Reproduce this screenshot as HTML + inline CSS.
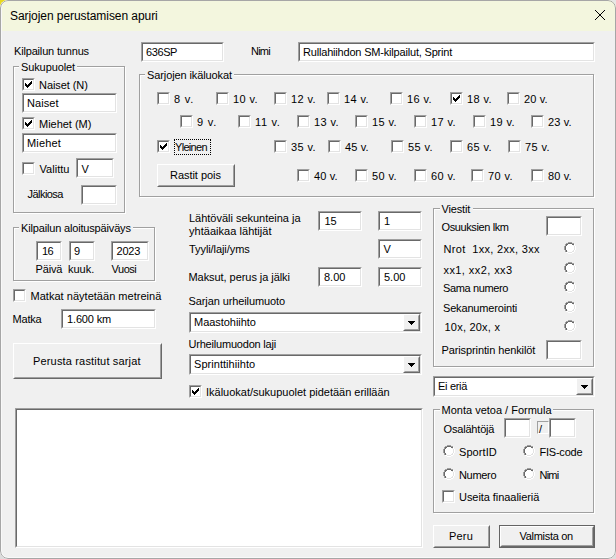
<!DOCTYPE html>
<html><head><meta charset="utf-8"><style>
html,body{margin:0;padding:0;width:616px;height:559px;overflow:hidden;background:#dcdcdc;}
.win{position:absolute;left:0;top:0;width:616px;height:559px;background:#f0f0f0;border-radius:8px;overflow:hidden;}
.frame{position:absolute;left:0;top:0;width:616px;height:559px;border-radius:8px;box-sizing:border-box;border:1px solid #a6a6a6;}
.hl{position:absolute;left:1px;top:1px;width:614px;height:557px;border-radius:7px;box-sizing:border-box;border-left:1px solid #f8f8f8;border-bottom:1px solid #f8f8f8;}
.title{position:absolute;left:0;top:0;width:616px;height:31px;background:#f3f6de;}
.ab{position:absolute;}
.t{position:absolute;white-space:pre;font-family:"Liberation Sans", sans-serif;}
.sk{position:absolute;border-style:solid;border-width:1px;border-color:#a0a0a0 #fff #fff #a0a0a0;}
.sk2{border-style:solid;border-width:1px;border-color:#696969 #e3e3e3 #e3e3e3 #696969;}
.rs{position:absolute;border-style:solid;border-width:1px;border-color:#fff #696969 #696969 #fff;background:#f0f0f0;}
.rs2{border-style:solid;border-width:1px;border-color:#f0f0f0 #a0a0a0 #a0a0a0 #f0f0f0;}
.cb{position:absolute;width:11px;height:11px;border-style:solid;border-width:1px;border-color:#a0a0a0 #fff #fff #a0a0a0;}
.gp{position:absolute;border-style:solid;border-width:1px;border-color:#a0a0a0 #fff #fff #a0a0a0;box-shadow:1px 1px 0 0 #fff inset, 1px 1px 0 0 #a0a0a0;}
</style></head><body>
<div class="ab" style="left:0;top:0;width:10px;height:10px;background:#e8d820"></div><div class="ab" style="left:606px;top:0;width:10px;height:10px;background:#e6e6e6"></div>
<div class="win">
<div class="title"></div>
<div class="t" style="left:10px;top:10px;font-size:12px;line-height:12px;color:#000;letter-spacing:-0.065px;">Sarjojen perustamisen apuri</div>
<svg class="ab" style="left:594px;top:9px" width="12" height="12"><path d="M1 1 L11 11 M11 1 L1 11" stroke="#000" stroke-width="1"/></svg>
<div class="t" style="left:14px;top:46px;font-size:11px;line-height:11px;color:#000;letter-spacing:-0.173px;">Kilpailun tunnus</div>
<div class="sk" style="left:141px;top:42px;width:81px;height:18px;"><div class="sk2" style="width:79px;height:16px;background:#fff"></div></div>
<div class="t" style="left:146px;top:47px;font-size:11px;line-height:11px;color:#000;letter-spacing:-0.4px;">636SP</div>
<div class="t" style="left:251px;top:46px;font-size:11px;line-height:11px;color:#000;letter-spacing:-0.8px;">Nimi</div>
<div class="sk" style="left:298px;top:42px;width:295px;height:18px;"><div class="sk2" style="width:293px;height:16px;background:#fff"></div></div>
<div class="t" style="left:303px;top:47px;font-size:11px;line-height:11px;color:#000;letter-spacing:-0.188px;">Rullahiihdon SM-kilpailut, Sprint</div>
<div class="ab" style="left:14px;top:67px;width:112px;height:147px;border:1px solid #fff;box-sizing:border-box"></div>
<div class="ab" style="left:13px;top:66px;width:112px;height:147px;border:1px solid #a0a0a0;box-sizing:border-box"></div>
<div class="ab" style="left:19px;top:62px;width:57.5px;height:8px;background:#f0f0f0"></div>
<div class="t" style="left:21px;top:62px;font-size:11px;line-height:11px;color:#000;letter-spacing:-0.111px;">Sukupuolet</div>
<div class="cb" style="left:22px;top:78px;"><div class="sk2" style="width:9px;height:9px;background:#fff"></div><svg width="7" height="7" style="position:absolute;left:2px;top:2px" shape-rendering="crispEdges"><path d="M6 0h1v1h-1zM5 1h1v1h-1zM6 1h1v1h-1zM0 2h1v1h-1zM4 2h1v1h-1zM5 2h1v1h-1zM6 2h1v1h-1zM0 3h1v1h-1zM1 3h1v1h-1zM3 3h1v1h-1zM4 3h1v1h-1zM5 3h1v1h-1zM0 4h1v1h-1zM1 4h1v1h-1zM2 4h1v1h-1zM3 4h1v1h-1zM4 4h1v1h-1zM1 5h1v1h-1zM2 5h1v1h-1zM3 5h1v1h-1zM2 6h1v1h-1z" fill="#000"/></svg></div>
<div class="t" style="left:39px;top:80px;font-size:11px;line-height:11px;color:#000;letter-spacing:-0.066px;">Naiset (N)</div>
<div class="sk" style="left:22px;top:93px;width:93px;height:18px;"><div class="sk2" style="width:91px;height:16px;background:#fff"></div></div>
<div class="t" style="left:27px;top:98px;font-size:11px;line-height:11px;color:#000;letter-spacing:0.08px;">Naiset</div>
<div class="cb" style="left:22px;top:117px;"><div class="sk2" style="width:9px;height:9px;background:#fff"></div><svg width="7" height="7" style="position:absolute;left:2px;top:2px" shape-rendering="crispEdges"><path d="M6 0h1v1h-1zM5 1h1v1h-1zM6 1h1v1h-1zM0 2h1v1h-1zM4 2h1v1h-1zM5 2h1v1h-1zM6 2h1v1h-1zM0 3h1v1h-1zM1 3h1v1h-1zM3 3h1v1h-1zM4 3h1v1h-1zM5 3h1v1h-1zM0 4h1v1h-1zM1 4h1v1h-1zM2 4h1v1h-1zM3 4h1v1h-1zM4 4h1v1h-1zM1 5h1v1h-1zM2 5h1v1h-1zM3 5h1v1h-1zM2 6h1v1h-1z" fill="#000"/></svg></div>
<div class="t" style="left:39px;top:119px;font-size:11px;line-height:11px;color:#000;letter-spacing:-0.022px;">Miehet (M)</div>
<div class="sk" style="left:22px;top:133px;width:93px;height:18px;"><div class="sk2" style="width:91px;height:16px;background:#fff"></div></div>
<div class="t" style="left:27px;top:138px;font-size:11px;line-height:11px;color:#000;letter-spacing:0.16px;">Miehet</div>
<div class="cb" style="left:22px;top:162px;"><div class="sk2" style="width:9px;height:9px;background:#fff"></div></div>
<div class="t" style="left:39.5px;top:164px;font-size:11px;line-height:11px;color:#000;letter-spacing:0.033px;">Valittu</div>
<div class="sk" style="left:76px;top:158px;width:36px;height:18px;"><div class="sk2" style="width:34px;height:16px;background:#fff"></div></div>
<div class="t" style="left:81.5px;top:164px;font-size:11px;line-height:11px;color:#000;">V</div>
<div class="t" style="left:27.5px;top:189px;font-size:11px;line-height:11px;color:#000;letter-spacing:-0.543px;">Jälkiosa</div>
<div class="sk" style="left:81px;top:185px;width:34px;height:18px;"><div class="sk2" style="width:32px;height:16px;background:#fff"></div></div>
<div class="ab" style="left:14px;top:228px;width:142px;height:54px;border:1px solid #fff;box-sizing:border-box"></div>
<div class="ab" style="left:13px;top:227px;width:142px;height:54px;border:1px solid #a0a0a0;box-sizing:border-box"></div>
<div class="ab" style="left:19px;top:223px;width:113.6px;height:8px;background:#f0f0f0"></div>
<div class="t" style="left:21px;top:223px;font-size:11px;line-height:11px;color:#000;letter-spacing:-0.166px;">Kilpailun aloituspäiväys</div>
<div class="sk" style="left:36px;top:241px;width:24px;height:18px;"><div class="sk2" style="width:22px;height:16px;background:#fff"></div></div>
<div class="t" style="left:42px;top:246px;font-size:11px;line-height:11px;color:#000;letter-spacing:-0.6px;">16</div>
<div class="sk" style="left:69px;top:241px;width:24px;height:18px;"><div class="sk2" style="width:22px;height:16px;background:#fff"></div></div>
<div class="t" style="left:74px;top:246px;font-size:11px;line-height:11px;color:#000;">9</div>
<div class="sk" style="left:111px;top:241px;width:36px;height:18px;"><div class="sk2" style="width:34px;height:16px;background:#fff"></div></div>
<div class="t" style="left:116.5px;top:246px;font-size:11px;line-height:11px;color:#000;letter-spacing:-0.2px;">2023</div>
<div class="t" style="left:35.5px;top:264px;font-size:11px;line-height:11px;color:#000;letter-spacing:-0.15px;">Päivä</div>
<div class="t" style="left:68px;top:264px;font-size:11px;line-height:11px;color:#000;letter-spacing:0.0px;">kuuk.</div>
<div class="t" style="left:111.5px;top:264px;font-size:11px;line-height:11px;color:#000;letter-spacing:-0.45px;">Vuosi</div>
<div class="cb" style="left:13px;top:289px;"><div class="sk2" style="width:9px;height:9px;background:#fff"></div></div>
<div class="t" style="left:30.5px;top:291px;font-size:11px;line-height:11px;color:#000;letter-spacing:0.025px;">Matkat näytetään metreinä</div>
<div class="t" style="left:12.5px;top:314px;font-size:11px;line-height:11px;color:#000;letter-spacing:-0.2px;">Matka</div>
<div class="sk" style="left:61px;top:309px;width:93px;height:18px;"><div class="sk2" style="width:91px;height:16px;background:#fff"></div></div>
<div class="t" style="left:67px;top:314px;font-size:11px;line-height:11px;color:#000;letter-spacing:-0.143px;">1.600 km</div>
<div class="rs" style="left:13px;top:343px;width:147px;height:34px;"><div class="rs2" style="width:145px;height:32px;"></div></div>
<div class="t" style="left:33px;top:356px;font-size:11px;line-height:11px;color:#000;letter-spacing:0.164px;">Perusta rastitut sarjat</div>
<div class="sk" style="left:15px;top:408px;width:406px;height:138px;"><div class="sk2" style="width:404px;height:136px;background:#fff"></div></div>
<div class="ab" style="left:140px;top:75px;width:455px;height:123px;border:1px solid #fff;box-sizing:border-box"></div>
<div class="ab" style="left:139px;top:74px;width:455px;height:123px;border:1px solid #a0a0a0;box-sizing:border-box"></div>
<div class="ab" style="left:145px;top:70px;width:89.1px;height:8px;background:#f0f0f0"></div>
<div class="t" style="left:147px;top:70px;font-size:11px;line-height:11px;color:#000;letter-spacing:-0.106px;">Sarjojen ikäluokat</div>
<div class="cb" style="left:157px;top:92px;"><div class="sk2" style="width:9px;height:9px;background:#fff"></div></div>
<div class="t" style="left:174px;top:94px;font-size:11px;line-height:11px;color:#000;letter-spacing:0.8px;">8 v.</div>
<div class="cb" style="left:216px;top:92px;"><div class="sk2" style="width:9px;height:9px;background:#fff"></div></div>
<div class="t" style="left:233px;top:94px;font-size:11px;line-height:11px;color:#000;letter-spacing:0.4px;">10 v.</div>
<div class="cb" style="left:274px;top:92px;"><div class="sk2" style="width:9px;height:9px;background:#fff"></div></div>
<div class="t" style="left:291px;top:94px;font-size:11px;line-height:11px;color:#000;letter-spacing:0.4px;">12 v.</div>
<div class="cb" style="left:327px;top:92px;"><div class="sk2" style="width:9px;height:9px;background:#fff"></div></div>
<div class="t" style="left:344px;top:94px;font-size:11px;line-height:11px;color:#000;letter-spacing:0.4px;">14 v.</div>
<div class="cb" style="left:390px;top:92px;"><div class="sk2" style="width:9px;height:9px;background:#fff"></div></div>
<div class="t" style="left:407px;top:94px;font-size:11px;line-height:11px;color:#000;letter-spacing:0.4px;">16 v.</div>
<div class="cb" style="left:450px;top:92px;"><div class="sk2" style="width:9px;height:9px;background:#fff"></div><svg width="7" height="7" style="position:absolute;left:2px;top:2px" shape-rendering="crispEdges"><path d="M6 0h1v1h-1zM5 1h1v1h-1zM6 1h1v1h-1zM0 2h1v1h-1zM4 2h1v1h-1zM5 2h1v1h-1zM6 2h1v1h-1zM0 3h1v1h-1zM1 3h1v1h-1zM3 3h1v1h-1zM4 3h1v1h-1zM5 3h1v1h-1zM0 4h1v1h-1zM1 4h1v1h-1zM2 4h1v1h-1zM3 4h1v1h-1zM4 4h1v1h-1zM1 5h1v1h-1zM2 5h1v1h-1zM3 5h1v1h-1zM2 6h1v1h-1z" fill="#000"/></svg></div>
<div class="t" style="left:467px;top:94px;font-size:11px;line-height:11px;color:#000;letter-spacing:0.4px;">18 v.</div>
<div class="cb" style="left:507px;top:92px;"><div class="sk2" style="width:9px;height:9px;background:#fff"></div></div>
<div class="t" style="left:524px;top:94px;font-size:11px;line-height:11px;color:#000;letter-spacing:0.15px;">20 v.</div>
<div class="cb" style="left:180px;top:115px;"><div class="sk2" style="width:9px;height:9px;background:#fff"></div></div>
<div class="t" style="left:197px;top:117px;font-size:11px;line-height:11px;color:#000;letter-spacing:0.8px;">9 v.</div>
<div class="cb" style="left:238px;top:115px;"><div class="sk2" style="width:9px;height:9px;background:#fff"></div></div>
<div class="t" style="left:255px;top:117px;font-size:11px;line-height:11px;color:#000;letter-spacing:0.65px;">11 v.</div>
<div class="cb" style="left:297px;top:115px;"><div class="sk2" style="width:9px;height:9px;background:#fff"></div></div>
<div class="t" style="left:314px;top:117px;font-size:11px;line-height:11px;color:#000;letter-spacing:0.4px;">13 v.</div>
<div class="cb" style="left:355px;top:115px;"><div class="sk2" style="width:9px;height:9px;background:#fff"></div></div>
<div class="t" style="left:372px;top:117px;font-size:11px;line-height:11px;color:#000;letter-spacing:0.4px;">15 v.</div>
<div class="cb" style="left:414px;top:115px;"><div class="sk2" style="width:9px;height:9px;background:#fff"></div></div>
<div class="t" style="left:431px;top:117px;font-size:11px;line-height:11px;color:#000;letter-spacing:0.4px;">17 v.</div>
<div class="cb" style="left:473px;top:115px;"><div class="sk2" style="width:9px;height:9px;background:#fff"></div></div>
<div class="t" style="left:490px;top:117px;font-size:11px;line-height:11px;color:#000;letter-spacing:0.4px;">19 v.</div>
<div class="cb" style="left:531px;top:115px;"><div class="sk2" style="width:9px;height:9px;background:#fff"></div></div>
<div class="t" style="left:548px;top:117px;font-size:11px;line-height:11px;color:#000;letter-spacing:0.15px;">23 v.</div>
<div class="cb" style="left:157px;top:140px;"><div class="sk2" style="width:9px;height:9px;background:#fff"></div><svg width="7" height="7" style="position:absolute;left:2px;top:2px" shape-rendering="crispEdges"><path d="M6 0h1v1h-1zM5 1h1v1h-1zM6 1h1v1h-1zM0 2h1v1h-1zM4 2h1v1h-1zM5 2h1v1h-1zM6 2h1v1h-1zM0 3h1v1h-1zM1 3h1v1h-1zM3 3h1v1h-1zM4 3h1v1h-1zM5 3h1v1h-1zM0 4h1v1h-1zM1 4h1v1h-1zM2 4h1v1h-1zM3 4h1v1h-1zM4 4h1v1h-1zM1 5h1v1h-1zM2 5h1v1h-1zM3 5h1v1h-1zM2 6h1v1h-1z" fill="#000"/></svg></div>
<div class="t" style="left:175px;top:142px;font-size:11px;line-height:11px;color:#000;letter-spacing:-0.7px;">Yleinen</div>
<div class="ab" style="left:174px;top:139px;width:35px;height:14px;border:1px dotted #000"></div>
<div class="cb" style="left:274px;top:140px;"><div class="sk2" style="width:9px;height:9px;background:#fff"></div></div>
<div class="t" style="left:291px;top:142px;font-size:11px;line-height:11px;color:#000;letter-spacing:0.4px;">35 v.</div>
<div class="cb" style="left:328px;top:140px;"><div class="sk2" style="width:9px;height:9px;background:#fff"></div></div>
<div class="t" style="left:345px;top:142px;font-size:11px;line-height:11px;color:#000;letter-spacing:0.15px;">45 v.</div>
<div class="cb" style="left:391px;top:140px;"><div class="sk2" style="width:9px;height:9px;background:#fff"></div></div>
<div class="t" style="left:408px;top:142px;font-size:11px;line-height:11px;color:#000;letter-spacing:0.4px;">55 v.</div>
<div class="cb" style="left:450px;top:140px;"><div class="sk2" style="width:9px;height:9px;background:#fff"></div></div>
<div class="t" style="left:467px;top:142px;font-size:11px;line-height:11px;color:#000;letter-spacing:0.4px;">65 v.</div>
<div class="cb" style="left:508px;top:140px;"><div class="sk2" style="width:9px;height:9px;background:#fff"></div></div>
<div class="t" style="left:525px;top:142px;font-size:11px;line-height:11px;color:#000;letter-spacing:0.4px;">75 v.</div>
<div class="rs" style="left:157px;top:164px;width:76px;height:21px;"><div class="rs2" style="width:74px;height:19px;"></div></div>
<div class="t" style="left:170px;top:170px;font-size:11px;line-height:11px;color:#000;letter-spacing:-0.04px;">Rastit pois</div>
<div class="cb" style="left:297px;top:169px;"><div class="sk2" style="width:9px;height:9px;background:#fff"></div></div>
<div class="t" style="left:314px;top:171px;font-size:11px;line-height:11px;color:#000;letter-spacing:0.15px;">40 v.</div>
<div class="cb" style="left:355px;top:169px;"><div class="sk2" style="width:9px;height:9px;background:#fff"></div></div>
<div class="t" style="left:372px;top:171px;font-size:11px;line-height:11px;color:#000;letter-spacing:0.4px;">50 v.</div>
<div class="cb" style="left:414px;top:169px;"><div class="sk2" style="width:9px;height:9px;background:#fff"></div></div>
<div class="t" style="left:431px;top:171px;font-size:11px;line-height:11px;color:#000;letter-spacing:0.4px;">60 v.</div>
<div class="cb" style="left:471px;top:169px;"><div class="sk2" style="width:9px;height:9px;background:#fff"></div></div>
<div class="t" style="left:488px;top:171px;font-size:11px;line-height:11px;color:#000;letter-spacing:0.4px;">70 v.</div>
<div class="cb" style="left:531px;top:169px;"><div class="sk2" style="width:9px;height:9px;background:#fff"></div></div>
<div class="t" style="left:548px;top:171px;font-size:11px;line-height:11px;color:#000;letter-spacing:0.15px;">80 v.</div>
<div class="t" style="left:189px;top:213px;font-size:11px;line-height:11px;color:#000;letter-spacing:-0.018px;">Lähtöväli sekunteina ja</div>
<div class="t" style="left:189px;top:226px;font-size:11px;line-height:11px;color:#000;letter-spacing:0.035px;">yhtäaikaa lähtijät</div>
<div class="sk" style="left:318px;top:211px;width:42px;height:18px;"><div class="sk2" style="width:40px;height:16px;background:#fff"></div></div>
<div class="t" style="left:324.5px;top:216px;font-size:11px;line-height:11px;color:#000;">15</div>
<div class="sk" style="left:378px;top:211px;width:42px;height:18px;"><div class="sk2" style="width:40px;height:16px;background:#fff"></div></div>
<div class="t" style="left:384px;top:216px;font-size:11px;line-height:11px;color:#000;">1</div>
<div class="t" style="left:189px;top:244px;font-size:11px;line-height:11px;color:#000;letter-spacing:-0.077px;">Tyyli/laji/yms</div>
<div class="sk" style="left:378px;top:239px;width:42px;height:18px;"><div class="sk2" style="width:40px;height:16px;background:#fff"></div></div>
<div class="t" style="left:383.5px;top:244px;font-size:11px;line-height:11px;color:#000;">V</div>
<div class="t" style="left:188.5px;top:272px;font-size:11px;line-height:11px;color:#000;letter-spacing:-0.057px;">Maksut, perus ja jälki</div>
<div class="sk" style="left:318px;top:267px;width:42px;height:18px;"><div class="sk2" style="width:40px;height:16px;background:#fff"></div></div>
<div class="t" style="left:324px;top:272px;font-size:11px;line-height:11px;color:#000;">8.00</div>
<div class="sk" style="left:378px;top:267px;width:42px;height:18px;"><div class="sk2" style="width:40px;height:16px;background:#fff"></div></div>
<div class="t" style="left:384px;top:272px;font-size:11px;line-height:11px;color:#000;">5.00</div>
<div class="t" style="left:188.5px;top:296px;font-size:11px;line-height:11px;color:#000;letter-spacing:-0.1px;">Sarjan urheilumuoto</div>
<div class="sk" style="left:189px;top:312px;width:231px;height:19px;"><div class="sk2" style="width:229px;height:17px;background:#fff"></div></div>
<div class="t" style="left:194px;top:317px;font-size:11px;line-height:11px;color:#000;letter-spacing:-0.037px;">Maastohiihto</div>
<div class="rs" style="left:403px;top:314px;width:15px;height:15px;"><div class="rs2" style="width:13px;height:13px;"></div></div>
<svg class="ab" style="left:408px;top:321px" width="7" height="4" shape-rendering="crispEdges"><path d="M0 0h7v1h-7zM1 1h5v1h-5zM2 2h3v1h-3zM3 3h1v1h-1z" fill="#000"/></svg>
<div class="t" style="left:188.5px;top:339px;font-size:11px;line-height:11px;color:#000;letter-spacing:-0.2px;">Urheilumuodon laji</div>
<div class="sk" style="left:189px;top:354px;width:231px;height:19px;"><div class="sk2" style="width:229px;height:17px;background:#fff"></div></div>
<div class="t" style="left:194px;top:359px;font-size:11px;line-height:11px;color:#000;letter-spacing:0.047px;">Sprinttihiihto</div>
<div class="rs" style="left:403px;top:356px;width:15px;height:15px;"><div class="rs2" style="width:13px;height:13px;"></div></div>
<svg class="ab" style="left:408px;top:363px" width="7" height="4" shape-rendering="crispEdges"><path d="M0 0h7v1h-7zM1 1h5v1h-5zM2 2h3v1h-3zM3 3h1v1h-1z" fill="#000"/></svg>
<div class="cb" style="left:189px;top:385px;"><div class="sk2" style="width:9px;height:9px;background:#fff"></div><svg width="7" height="7" style="position:absolute;left:2px;top:2px" shape-rendering="crispEdges"><path d="M6 0h1v1h-1zM5 1h1v1h-1zM6 1h1v1h-1zM0 2h1v1h-1zM4 2h1v1h-1zM5 2h1v1h-1zM6 2h1v1h-1zM0 3h1v1h-1zM1 3h1v1h-1zM3 3h1v1h-1zM4 3h1v1h-1zM5 3h1v1h-1zM0 4h1v1h-1zM1 4h1v1h-1zM2 4h1v1h-1zM3 4h1v1h-1zM4 4h1v1h-1zM1 5h1v1h-1zM2 5h1v1h-1zM3 5h1v1h-1zM2 6h1v1h-1z" fill="#000"/></svg></div>
<div class="t" style="left:206px;top:387px;font-size:11px;line-height:11px;color:#000;letter-spacing:-0.01px;">Ikäluokat/sukupuolet pidetään erillään</div>
<div class="ab" style="left:434px;top:209px;width:161px;height:159px;border:1px solid #fff;box-sizing:border-box"></div>
<div class="ab" style="left:433px;top:208px;width:161px;height:159px;border:1px solid #a0a0a0;box-sizing:border-box"></div>
<div class="ab" style="left:439.5px;top:204px;width:33.5px;height:8px;background:#f0f0f0"></div>
<div class="t" style="left:441.5px;top:204px;font-size:11px;line-height:11px;color:#000;letter-spacing:-0.167px;">Viestit</div>
<div class="t" style="left:441.5px;top:222px;font-size:11px;line-height:11px;color:#000;letter-spacing:-0.384px;">Osuuksien lkm</div>
<div class="sk" style="left:546px;top:216px;width:34px;height:18px;"><div class="sk2" style="width:32px;height:16px;background:#fff"></div></div>
<div class="t" style="left:443.5px;top:244px;font-size:11px;line-height:11px;color:#000;letter-spacing:0.311px;">Nrot  1xx, 2xx, 3xx</div>
<svg class="ab" style="left:564px;top:242px" width="12" height="12" shape-rendering="crispEdges"><path d="M4 0h1v1h-1zM5 0h1v1h-1zM6 0h1v1h-1zM7 0h1v1h-1zM2 1h1v1h-1zM3 1h1v1h-1zM8 1h1v1h-1zM9 1h1v1h-1zM1 2h1v1h-1zM1 3h1v1h-1zM0 4h1v1h-1zM0 5h1v1h-1zM0 6h1v1h-1zM0 7h1v1h-1zM1 8h1v1h-1zM1 9h1v1h-1z" fill="#a0a0a0"/><path d="M4 1h1v1h-1zM5 1h1v1h-1zM6 1h1v1h-1zM7 1h1v1h-1zM2 2h1v1h-1zM3 2h1v1h-1zM8 2h1v1h-1zM9 2h1v1h-1zM2 3h1v1h-1zM1 4h1v1h-1zM1 5h1v1h-1zM1 6h1v1h-1zM1 7h1v1h-1zM2 8h1v1h-1zM2 9h1v1h-1z" fill="#696969"/><path d="M10 2h1v1h-1zM10 3h1v1h-1zM11 4h1v1h-1zM11 5h1v1h-1zM11 6h1v1h-1zM11 7h1v1h-1zM10 8h1v1h-1zM10 9h1v1h-1zM2 10h1v1h-1zM3 10h1v1h-1zM8 10h1v1h-1zM9 10h1v1h-1zM4 11h1v1h-1zM5 11h1v1h-1zM6 11h1v1h-1zM7 11h1v1h-1z" fill="#ffffff"/><path d="M9 3h1v1h-1zM10 4h1v1h-1zM10 5h1v1h-1zM10 6h1v1h-1zM10 7h1v1h-1zM9 8h1v1h-1zM3 9h1v1h-1zM8 9h1v1h-1zM9 9h1v1h-1zM4 10h1v1h-1zM5 10h1v1h-1zM6 10h1v1h-1zM7 10h1v1h-1z" fill="#e3e3e3"/><path d="M4 2h4v1h-4zM3 3h6v1h-6zM2 4h8v1h-8zM2 5h8v1h-8zM2 6h8v1h-8zM2 7h8v1h-8zM3 8h6v1h-6zM4 9h4v1h-4z" fill="#fff"/></svg>
<div class="t" style="left:443.5px;top:265px;font-size:11px;line-height:11px;color:#000;letter-spacing:0.417px;">xx1, xx2, xx3</div>
<svg class="ab" style="left:564px;top:262px" width="12" height="12" shape-rendering="crispEdges"><path d="M4 0h1v1h-1zM5 0h1v1h-1zM6 0h1v1h-1zM7 0h1v1h-1zM2 1h1v1h-1zM3 1h1v1h-1zM8 1h1v1h-1zM9 1h1v1h-1zM1 2h1v1h-1zM1 3h1v1h-1zM0 4h1v1h-1zM0 5h1v1h-1zM0 6h1v1h-1zM0 7h1v1h-1zM1 8h1v1h-1zM1 9h1v1h-1z" fill="#a0a0a0"/><path d="M4 1h1v1h-1zM5 1h1v1h-1zM6 1h1v1h-1zM7 1h1v1h-1zM2 2h1v1h-1zM3 2h1v1h-1zM8 2h1v1h-1zM9 2h1v1h-1zM2 3h1v1h-1zM1 4h1v1h-1zM1 5h1v1h-1zM1 6h1v1h-1zM1 7h1v1h-1zM2 8h1v1h-1zM2 9h1v1h-1z" fill="#696969"/><path d="M10 2h1v1h-1zM10 3h1v1h-1zM11 4h1v1h-1zM11 5h1v1h-1zM11 6h1v1h-1zM11 7h1v1h-1zM10 8h1v1h-1zM10 9h1v1h-1zM2 10h1v1h-1zM3 10h1v1h-1zM8 10h1v1h-1zM9 10h1v1h-1zM4 11h1v1h-1zM5 11h1v1h-1zM6 11h1v1h-1zM7 11h1v1h-1z" fill="#ffffff"/><path d="M9 3h1v1h-1zM10 4h1v1h-1zM10 5h1v1h-1zM10 6h1v1h-1zM10 7h1v1h-1zM9 8h1v1h-1zM3 9h1v1h-1zM8 9h1v1h-1zM9 9h1v1h-1zM4 10h1v1h-1zM5 10h1v1h-1zM6 10h1v1h-1zM7 10h1v1h-1z" fill="#e3e3e3"/><path d="M4 2h4v1h-4zM3 3h6v1h-6zM2 4h8v1h-8zM2 5h8v1h-8zM2 6h8v1h-8zM2 7h8v1h-8zM3 8h6v1h-6zM4 9h4v1h-4z" fill="#fff"/></svg>
<div class="t" style="left:443px;top:283px;font-size:11px;line-height:11px;color:#000;letter-spacing:-0.36px;">Sama numero</div>
<svg class="ab" style="left:564px;top:281px" width="12" height="12" shape-rendering="crispEdges"><path d="M4 0h1v1h-1zM5 0h1v1h-1zM6 0h1v1h-1zM7 0h1v1h-1zM2 1h1v1h-1zM3 1h1v1h-1zM8 1h1v1h-1zM9 1h1v1h-1zM1 2h1v1h-1zM1 3h1v1h-1zM0 4h1v1h-1zM0 5h1v1h-1zM0 6h1v1h-1zM0 7h1v1h-1zM1 8h1v1h-1zM1 9h1v1h-1z" fill="#a0a0a0"/><path d="M4 1h1v1h-1zM5 1h1v1h-1zM6 1h1v1h-1zM7 1h1v1h-1zM2 2h1v1h-1zM3 2h1v1h-1zM8 2h1v1h-1zM9 2h1v1h-1zM2 3h1v1h-1zM1 4h1v1h-1zM1 5h1v1h-1zM1 6h1v1h-1zM1 7h1v1h-1zM2 8h1v1h-1zM2 9h1v1h-1z" fill="#696969"/><path d="M10 2h1v1h-1zM10 3h1v1h-1zM11 4h1v1h-1zM11 5h1v1h-1zM11 6h1v1h-1zM11 7h1v1h-1zM10 8h1v1h-1zM10 9h1v1h-1zM2 10h1v1h-1zM3 10h1v1h-1zM8 10h1v1h-1zM9 10h1v1h-1zM4 11h1v1h-1zM5 11h1v1h-1zM6 11h1v1h-1zM7 11h1v1h-1z" fill="#ffffff"/><path d="M9 3h1v1h-1zM10 4h1v1h-1zM10 5h1v1h-1zM10 6h1v1h-1zM10 7h1v1h-1zM9 8h1v1h-1zM3 9h1v1h-1zM8 9h1v1h-1zM9 9h1v1h-1zM4 10h1v1h-1zM5 10h1v1h-1zM6 10h1v1h-1zM7 10h1v1h-1z" fill="#e3e3e3"/><path d="M4 2h4v1h-4zM3 3h6v1h-6zM2 4h8v1h-8zM2 5h8v1h-8zM2 6h8v1h-8zM2 7h8v1h-8zM3 8h6v1h-6zM4 9h4v1h-4z" fill="#fff"/></svg>
<div class="t" style="left:443px;top:303px;font-size:11px;line-height:11px;color:#000;letter-spacing:-0.17px;">Sekanumerointi</div>
<svg class="ab" style="left:564px;top:301px" width="12" height="12" shape-rendering="crispEdges"><path d="M4 0h1v1h-1zM5 0h1v1h-1zM6 0h1v1h-1zM7 0h1v1h-1zM2 1h1v1h-1zM3 1h1v1h-1zM8 1h1v1h-1zM9 1h1v1h-1zM1 2h1v1h-1zM1 3h1v1h-1zM0 4h1v1h-1zM0 5h1v1h-1zM0 6h1v1h-1zM0 7h1v1h-1zM1 8h1v1h-1zM1 9h1v1h-1z" fill="#a0a0a0"/><path d="M4 1h1v1h-1zM5 1h1v1h-1zM6 1h1v1h-1zM7 1h1v1h-1zM2 2h1v1h-1zM3 2h1v1h-1zM8 2h1v1h-1zM9 2h1v1h-1zM2 3h1v1h-1zM1 4h1v1h-1zM1 5h1v1h-1zM1 6h1v1h-1zM1 7h1v1h-1zM2 8h1v1h-1zM2 9h1v1h-1z" fill="#696969"/><path d="M10 2h1v1h-1zM10 3h1v1h-1zM11 4h1v1h-1zM11 5h1v1h-1zM11 6h1v1h-1zM11 7h1v1h-1zM10 8h1v1h-1zM10 9h1v1h-1zM2 10h1v1h-1zM3 10h1v1h-1zM8 10h1v1h-1zM9 10h1v1h-1zM4 11h1v1h-1zM5 11h1v1h-1zM6 11h1v1h-1zM7 11h1v1h-1z" fill="#ffffff"/><path d="M9 3h1v1h-1zM10 4h1v1h-1zM10 5h1v1h-1zM10 6h1v1h-1zM10 7h1v1h-1zM9 8h1v1h-1zM3 9h1v1h-1zM8 9h1v1h-1zM9 9h1v1h-1zM4 10h1v1h-1zM5 10h1v1h-1zM6 10h1v1h-1zM7 10h1v1h-1z" fill="#e3e3e3"/><path d="M4 2h4v1h-4zM3 3h6v1h-6zM2 4h8v1h-8zM2 5h8v1h-8zM2 6h8v1h-8zM2 7h8v1h-8zM3 8h6v1h-6zM4 9h4v1h-4z" fill="#fff"/></svg>
<div class="t" style="left:444.5px;top:322px;font-size:11px;line-height:11px;color:#000;letter-spacing:0.22px;">10x, 20x, x</div>
<svg class="ab" style="left:564px;top:320px" width="12" height="12" shape-rendering="crispEdges"><path d="M4 0h1v1h-1zM5 0h1v1h-1zM6 0h1v1h-1zM7 0h1v1h-1zM2 1h1v1h-1zM3 1h1v1h-1zM8 1h1v1h-1zM9 1h1v1h-1zM1 2h1v1h-1zM1 3h1v1h-1zM0 4h1v1h-1zM0 5h1v1h-1zM0 6h1v1h-1zM0 7h1v1h-1zM1 8h1v1h-1zM1 9h1v1h-1z" fill="#a0a0a0"/><path d="M4 1h1v1h-1zM5 1h1v1h-1zM6 1h1v1h-1zM7 1h1v1h-1zM2 2h1v1h-1zM3 2h1v1h-1zM8 2h1v1h-1zM9 2h1v1h-1zM2 3h1v1h-1zM1 4h1v1h-1zM1 5h1v1h-1zM1 6h1v1h-1zM1 7h1v1h-1zM2 8h1v1h-1zM2 9h1v1h-1z" fill="#696969"/><path d="M10 2h1v1h-1zM10 3h1v1h-1zM11 4h1v1h-1zM11 5h1v1h-1zM11 6h1v1h-1zM11 7h1v1h-1zM10 8h1v1h-1zM10 9h1v1h-1zM2 10h1v1h-1zM3 10h1v1h-1zM8 10h1v1h-1zM9 10h1v1h-1zM4 11h1v1h-1zM5 11h1v1h-1zM6 11h1v1h-1zM7 11h1v1h-1z" fill="#ffffff"/><path d="M9 3h1v1h-1zM10 4h1v1h-1zM10 5h1v1h-1zM10 6h1v1h-1zM10 7h1v1h-1zM9 8h1v1h-1zM3 9h1v1h-1zM8 9h1v1h-1zM9 9h1v1h-1zM4 10h1v1h-1zM5 10h1v1h-1zM6 10h1v1h-1zM7 10h1v1h-1z" fill="#e3e3e3"/><path d="M4 2h4v1h-4zM3 3h6v1h-6zM2 4h8v1h-8zM2 5h8v1h-8zM2 6h8v1h-8zM2 7h8v1h-8zM3 8h6v1h-6zM4 9h4v1h-4z" fill="#fff"/></svg>
<div class="t" style="left:441.5px;top:345px;font-size:11px;line-height:11px;color:#000;letter-spacing:-0.11px;">Parisprintin henkilöt</div>
<div class="sk" style="left:546px;top:340px;width:34px;height:18px;"><div class="sk2" style="width:32px;height:16px;background:#fff"></div></div>
<div class="sk" style="left:433px;top:376px;width:160px;height:19px;"><div class="sk2" style="width:158px;height:17px;background:#fff"></div></div>
<div class="t" style="left:438px;top:381px;font-size:11px;line-height:11px;color:#000;letter-spacing:-0.3px;">Ei eriä</div>
<div class="rs" style="left:576px;top:378px;width:15px;height:15px;"><div class="rs2" style="width:13px;height:13px;"></div></div>
<svg class="ab" style="left:581px;top:385px" width="7" height="4" shape-rendering="crispEdges"><path d="M0 0h7v1h-7zM1 1h5v1h-5zM2 2h3v1h-3zM3 3h1v1h-1z" fill="#000"/></svg>
<div class="ab" style="left:434px;top:410px;width:161px;height:104px;border:1px solid #fff;box-sizing:border-box"></div>
<div class="ab" style="left:433px;top:409px;width:161px;height:104px;border:1px solid #a0a0a0;box-sizing:border-box"></div>
<div class="ab" style="left:439.5px;top:405px;width:113.5px;height:8px;background:#f0f0f0"></div>
<div class="t" style="left:441.5px;top:405px;font-size:11px;line-height:11px;color:#000;letter-spacing:0.0px;">Monta vetoa / Formula</div>
<div class="t" style="left:443.5px;top:424px;font-size:11px;line-height:11px;color:#000;letter-spacing:-0.178px;">Osalähtöjä</div>
<div class="sk" style="left:504px;top:418px;width:25px;height:18px;"><div class="sk2" style="width:23px;height:16px;background:#fff"></div></div>
<div class="ab" style="left:537px;top:421px;width:12px;height:13px;border-top:1px solid #a0a0a0;border-left:1px solid #a0a0a0;border-bottom:1px solid #fff;border-right:1px solid #fff;box-sizing:border-box"></div>
<div class="t" style="left:539px;top:424px;font-size:11px;line-height:11px;color:#000;">/</div>
<div class="sk" style="left:549px;top:418px;width:25px;height:18px;"><div class="sk2" style="width:23px;height:16px;background:#fff"></div></div>
<svg class="ab" style="left:443px;top:445px" width="12" height="12" shape-rendering="crispEdges"><path d="M4 0h1v1h-1zM5 0h1v1h-1zM6 0h1v1h-1zM7 0h1v1h-1zM2 1h1v1h-1zM3 1h1v1h-1zM8 1h1v1h-1zM9 1h1v1h-1zM1 2h1v1h-1zM1 3h1v1h-1zM0 4h1v1h-1zM0 5h1v1h-1zM0 6h1v1h-1zM0 7h1v1h-1zM1 8h1v1h-1zM1 9h1v1h-1z" fill="#a0a0a0"/><path d="M4 1h1v1h-1zM5 1h1v1h-1zM6 1h1v1h-1zM7 1h1v1h-1zM2 2h1v1h-1zM3 2h1v1h-1zM8 2h1v1h-1zM9 2h1v1h-1zM2 3h1v1h-1zM1 4h1v1h-1zM1 5h1v1h-1zM1 6h1v1h-1zM1 7h1v1h-1zM2 8h1v1h-1zM2 9h1v1h-1z" fill="#696969"/><path d="M10 2h1v1h-1zM10 3h1v1h-1zM11 4h1v1h-1zM11 5h1v1h-1zM11 6h1v1h-1zM11 7h1v1h-1zM10 8h1v1h-1zM10 9h1v1h-1zM2 10h1v1h-1zM3 10h1v1h-1zM8 10h1v1h-1zM9 10h1v1h-1zM4 11h1v1h-1zM5 11h1v1h-1zM6 11h1v1h-1zM7 11h1v1h-1z" fill="#ffffff"/><path d="M9 3h1v1h-1zM10 4h1v1h-1zM10 5h1v1h-1zM10 6h1v1h-1zM10 7h1v1h-1zM9 8h1v1h-1zM3 9h1v1h-1zM8 9h1v1h-1zM9 9h1v1h-1zM4 10h1v1h-1zM5 10h1v1h-1zM6 10h1v1h-1zM7 10h1v1h-1z" fill="#e3e3e3"/><path d="M4 2h4v1h-4zM3 3h6v1h-6zM2 4h8v1h-8zM2 5h8v1h-8zM2 6h8v1h-8zM2 7h8v1h-8zM3 8h6v1h-6zM4 9h4v1h-4z" fill="#fff"/></svg>
<div class="t" style="left:459px;top:447px;font-size:11px;line-height:11px;color:#000;letter-spacing:0.067px;">SportID</div>
<svg class="ab" style="left:523px;top:445px" width="12" height="12" shape-rendering="crispEdges"><path d="M4 0h1v1h-1zM5 0h1v1h-1zM6 0h1v1h-1zM7 0h1v1h-1zM2 1h1v1h-1zM3 1h1v1h-1zM8 1h1v1h-1zM9 1h1v1h-1zM1 2h1v1h-1zM1 3h1v1h-1zM0 4h1v1h-1zM0 5h1v1h-1zM0 6h1v1h-1zM0 7h1v1h-1zM1 8h1v1h-1zM1 9h1v1h-1z" fill="#a0a0a0"/><path d="M4 1h1v1h-1zM5 1h1v1h-1zM6 1h1v1h-1zM7 1h1v1h-1zM2 2h1v1h-1zM3 2h1v1h-1zM8 2h1v1h-1zM9 2h1v1h-1zM2 3h1v1h-1zM1 4h1v1h-1zM1 5h1v1h-1zM1 6h1v1h-1zM1 7h1v1h-1zM2 8h1v1h-1zM2 9h1v1h-1z" fill="#696969"/><path d="M10 2h1v1h-1zM10 3h1v1h-1zM11 4h1v1h-1zM11 5h1v1h-1zM11 6h1v1h-1zM11 7h1v1h-1zM10 8h1v1h-1zM10 9h1v1h-1zM2 10h1v1h-1zM3 10h1v1h-1zM8 10h1v1h-1zM9 10h1v1h-1zM4 11h1v1h-1zM5 11h1v1h-1zM6 11h1v1h-1zM7 11h1v1h-1z" fill="#ffffff"/><path d="M9 3h1v1h-1zM10 4h1v1h-1zM10 5h1v1h-1zM10 6h1v1h-1zM10 7h1v1h-1zM9 8h1v1h-1zM3 9h1v1h-1zM8 9h1v1h-1zM9 9h1v1h-1zM4 10h1v1h-1zM5 10h1v1h-1zM6 10h1v1h-1zM7 10h1v1h-1z" fill="#e3e3e3"/><path d="M4 2h4v1h-4zM3 3h6v1h-6zM2 4h8v1h-8zM2 5h8v1h-8zM2 6h8v1h-8zM2 7h8v1h-8zM3 8h6v1h-6zM4 9h4v1h-4z" fill="#fff"/></svg>
<div class="t" style="left:539.5px;top:447px;font-size:11px;line-height:11px;color:#000;letter-spacing:-0.228px;">FIS-code</div>
<svg class="ab" style="left:443px;top:468px" width="12" height="12" shape-rendering="crispEdges"><path d="M4 0h1v1h-1zM5 0h1v1h-1zM6 0h1v1h-1zM7 0h1v1h-1zM2 1h1v1h-1zM3 1h1v1h-1zM8 1h1v1h-1zM9 1h1v1h-1zM1 2h1v1h-1zM1 3h1v1h-1zM0 4h1v1h-1zM0 5h1v1h-1zM0 6h1v1h-1zM0 7h1v1h-1zM1 8h1v1h-1zM1 9h1v1h-1z" fill="#a0a0a0"/><path d="M4 1h1v1h-1zM5 1h1v1h-1zM6 1h1v1h-1zM7 1h1v1h-1zM2 2h1v1h-1zM3 2h1v1h-1zM8 2h1v1h-1zM9 2h1v1h-1zM2 3h1v1h-1zM1 4h1v1h-1zM1 5h1v1h-1zM1 6h1v1h-1zM1 7h1v1h-1zM2 8h1v1h-1zM2 9h1v1h-1z" fill="#696969"/><path d="M10 2h1v1h-1zM10 3h1v1h-1zM11 4h1v1h-1zM11 5h1v1h-1zM11 6h1v1h-1zM11 7h1v1h-1zM10 8h1v1h-1zM10 9h1v1h-1zM2 10h1v1h-1zM3 10h1v1h-1zM8 10h1v1h-1zM9 10h1v1h-1zM4 11h1v1h-1zM5 11h1v1h-1zM6 11h1v1h-1zM7 11h1v1h-1z" fill="#ffffff"/><path d="M9 3h1v1h-1zM10 4h1v1h-1zM10 5h1v1h-1zM10 6h1v1h-1zM10 7h1v1h-1zM9 8h1v1h-1zM3 9h1v1h-1zM8 9h1v1h-1zM9 9h1v1h-1zM4 10h1v1h-1zM5 10h1v1h-1zM6 10h1v1h-1zM7 10h1v1h-1z" fill="#e3e3e3"/><path d="M4 2h4v1h-4zM3 3h6v1h-6zM2 4h8v1h-8zM2 5h8v1h-8zM2 6h8v1h-8zM2 7h8v1h-8zM3 8h6v1h-6zM4 9h4v1h-4z" fill="#fff"/></svg>
<div class="t" style="left:459px;top:470px;font-size:11px;line-height:11px;color:#000;letter-spacing:-0.32px;">Numero</div>
<svg class="ab" style="left:523px;top:468px" width="12" height="12" shape-rendering="crispEdges"><path d="M4 0h1v1h-1zM5 0h1v1h-1zM6 0h1v1h-1zM7 0h1v1h-1zM2 1h1v1h-1zM3 1h1v1h-1zM8 1h1v1h-1zM9 1h1v1h-1zM1 2h1v1h-1zM1 3h1v1h-1zM0 4h1v1h-1zM0 5h1v1h-1zM0 6h1v1h-1zM0 7h1v1h-1zM1 8h1v1h-1zM1 9h1v1h-1z" fill="#a0a0a0"/><path d="M4 1h1v1h-1zM5 1h1v1h-1zM6 1h1v1h-1zM7 1h1v1h-1zM2 2h1v1h-1zM3 2h1v1h-1zM8 2h1v1h-1zM9 2h1v1h-1zM2 3h1v1h-1zM1 4h1v1h-1zM1 5h1v1h-1zM1 6h1v1h-1zM1 7h1v1h-1zM2 8h1v1h-1zM2 9h1v1h-1z" fill="#696969"/><path d="M10 2h1v1h-1zM10 3h1v1h-1zM11 4h1v1h-1zM11 5h1v1h-1zM11 6h1v1h-1zM11 7h1v1h-1zM10 8h1v1h-1zM10 9h1v1h-1zM2 10h1v1h-1zM3 10h1v1h-1zM8 10h1v1h-1zM9 10h1v1h-1zM4 11h1v1h-1zM5 11h1v1h-1zM6 11h1v1h-1zM7 11h1v1h-1z" fill="#ffffff"/><path d="M9 3h1v1h-1zM10 4h1v1h-1zM10 5h1v1h-1zM10 6h1v1h-1zM10 7h1v1h-1zM9 8h1v1h-1zM3 9h1v1h-1zM8 9h1v1h-1zM9 9h1v1h-1zM4 10h1v1h-1zM5 10h1v1h-1zM6 10h1v1h-1zM7 10h1v1h-1z" fill="#e3e3e3"/><path d="M4 2h4v1h-4zM3 3h6v1h-6zM2 4h8v1h-8zM2 5h8v1h-8zM2 6h8v1h-8zM2 7h8v1h-8zM3 8h6v1h-6zM4 9h4v1h-4z" fill="#fff"/></svg>
<div class="t" style="left:539.5px;top:470px;font-size:11px;line-height:11px;color:#000;letter-spacing:-0.8px;">Nimi</div>
<div class="cb" style="left:442px;top:490px;"><div class="sk2" style="width:9px;height:9px;background:#fff"></div></div>
<div class="t" style="left:459px;top:492px;font-size:11px;line-height:11px;color:#000;letter-spacing:-0.059px;">Useita finaalieriä</div>
<div class="rs" style="left:433px;top:525px;width:55px;height:21px;"><div class="rs2" style="width:53px;height:19px;"></div></div>
<div class="t" style="left:449px;top:531px;font-size:11px;line-height:11px;color:#000;letter-spacing:0.2px;">Peru</div>
<div class="ab" style="left:499px;top:525px;width:96px;height:23px;background:#646464"></div>
<div class="rs" style="left:500px;top:526px;width:92px;height:19px;"><div class="rs2" style="width:90px;height:17px;"></div></div>
<div class="t" style="left:519.5px;top:531px;font-size:11px;line-height:11px;color:#000;letter-spacing:-0.3px;">Valmista on</div>
<div class="hl"></div><div class="frame"></div>
</div>
</body></html>
